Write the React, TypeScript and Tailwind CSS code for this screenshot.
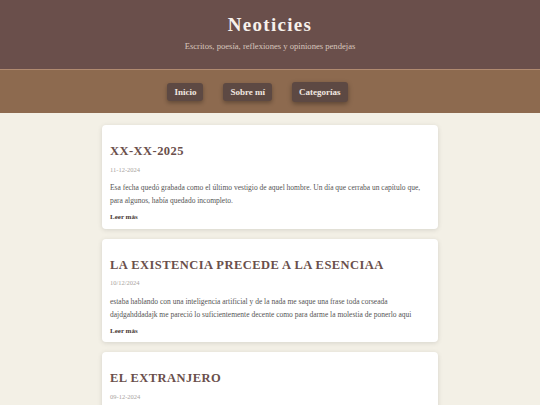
const posts = [
  {
    title: 'XX-XX-2025',
    date: '11-12-2024',
    text: 'Esa fecha quedó grabada como el último vestigio de aquel hombre. Un día que cerraba un capítulo que, para algunos, había quedado incompleto.',
  },
  {
    title: 'La existencia precede a la esenciaa',
    date: '10/12/2024',
    text: 'estaba hablando con una inteligencia artificial y de la nada me saque una frase toda corseada dajdgahddadajk me pareció lo suficientemente decente como para darme la molestia de ponerlo aqui',
  },
  {
    title: 'El extranjero',
    date: '09-12-2024',
    text: 'Una lectura que me dejó pensando en lo absurdo de todo.',
  },
]

export default function App() {
  return (
    <div className="min-h-screen bg-[#f3f0e6] font-['Liberation_Serif',serif]">
      {/* cabecera */}
      <header className="flex h-[70px] flex-col items-center justify-center border-b border-[#b08a70] bg-[#6a4f4b]">
        <h1 className="mt-[-3px] text-[19px] font-bold leading-none tracking-[1.3px] text-[#f7f1ec]">Neoticies</h1>
        <p className="mt-[8px] text-[8.6px] leading-none text-[#d8c6bd]">
          Escritos, poesía, reflexiones y opiniones pendejas
        </p>
      </header>

      {/* navegación */}
      <nav className="flex h-[43px] items-center justify-center gap-5 bg-[#8d6a4f] pr-[25px]">
        <a className="rounded-[3px] bg-[#5d4943] px-[7px] py-[4px] text-[9px] font-bold leading-[10px] text-[#f1e7e0] shadow-[0_2px_4px_rgba(0,0,0,0.3)]">
          Inicio
        </a>
        <a className="rounded-[3px] bg-[#5d4943] px-[7px] py-[4px] text-[9px] font-bold leading-[10px] text-[#f1e7e0] shadow-[0_2px_4px_rgba(0,0,0,0.3)]">
          Sobre mí
        </a>
        <a className="rounded-[3px] bg-[#5d4943] px-[7px] py-[5px] text-[9px] font-bold leading-[10px] text-[#f1e7e0] shadow-[0_2px_5px_rgba(0,0,0,0.35)]">
          Categorías
        </a>
      </nav>

      {/* entradas */}
      <main className="mx-auto flex w-[336px] flex-col gap-[10px] pt-[12px]">
        {posts.map((p) => (
          <article
            key={p.title}
            className="rounded-[4px] bg-white px-[8px] pb-[6px] pt-[20px] shadow-[0_1px_5px_rgba(0,0,0,0.12)]"
          >
            <h2 className="text-[12.5px] font-bold uppercase leading-none tracking-[0.45px] text-[#6a4f4b]">{p.title}</h2>
            <div className="mt-[9px] text-[6.5px] leading-none text-[#a9a3a0]">{p.date}</div>
            <p className="mt-[8px] text-[7.5px] leading-[13px] text-[#555]">{p.text}</p>
            <a className="mt-[5px] block text-[7px] font-bold text-[#4a3a36]">Leer más</a>
          </article>
        ))}
      </main>
    </div>
  )
}
